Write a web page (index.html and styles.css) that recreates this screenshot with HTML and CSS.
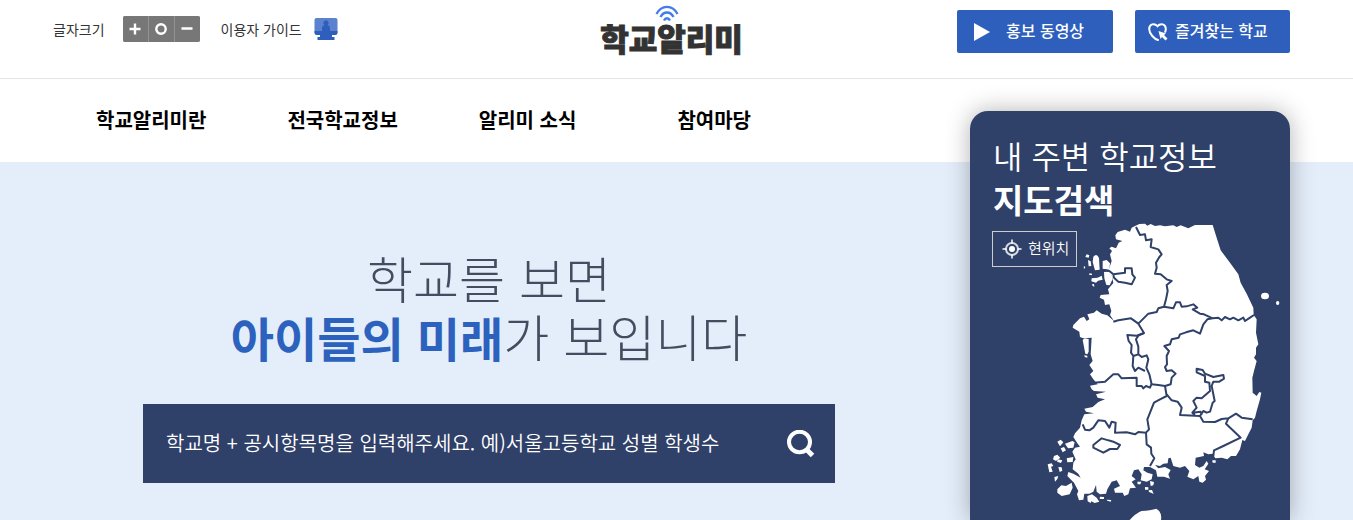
FILE: index.html
```html
<!DOCTYPE html>
<html lang="ko">
<head>
<meta charset="utf-8">
<meta name="viewport" content="width=device-width, initial-scale=1">
<title>학교알리미</title>
<link rel="stylesheet" href="styles.css">
</head>
<body>
<header class="top">
  <div class="tools">
    <span class="tools-label">글자크기</span>
    <div class="size-buttons">
      <button type="button" aria-label="글자 크게"><svg width="12" height="12" viewBox="0 0 12 12"><path d="M6 0.5v11M0.5 6h11"/></svg></button>
      <button type="button" aria-label="글자 기본"><svg width="12" height="12" viewBox="0 0 12 12"><circle cx="6" cy="6" r="4.7"/></svg></button>
      <button type="button" aria-label="글자 작게"><svg width="12" height="12" viewBox="0 0 12 12"><path d="M0.5 5.5h11"/></svg></button>
    </div>
    <a class="guide" href="#">이용자 가이드
      <svg width="24" height="24" viewBox="0 0 24 24"><rect x="0.5" y="1" width="23" height="16" rx="2" fill="#5a82cf"/><path d="M.5 14H8v-2.500q0-3 2.500-3.500a2.500 2.500 0 1 1 3 0q2.500.5 2.500 3.500V14h7.500v2q0 2-2 2H18v2h2.500v3h-17v-3H6v-2H2.500q-2 0-2-2z" fill="#2e5fbd"/></svg>
    </a>
  </div>
  <a class="logo" href="#">
    <svg width="24" height="17" viewBox="0 0 24 17"><path d="M1.500 9C6.500-.5 17.500-.5 22.500 9M5.500 12c3-6 10-6 13 0M9 15.500c1.500-3 4.500-3 6 0"/></svg>
    <span>학교알리미</span>
  </a>
  <div class="links">
    <a class="link-button" href="#"><svg class="play" width="16" height="18" viewBox="0 0 16 18"><path d="M0 0l16 9-16 9z" fill="#fff"/></svg><span>홍보 동영상</span></a>
    <a class="link-button favorite" href="#"><svg width="20" height="18" viewBox="0 0 20 18"><path d="M10 17C6.500 16 1.200 11 1.200 6 1.200.8 6.500-.2 9.500 3.200 12.500-.2 17.800.8 17.800 6c0 1.200-.2 2-.6 2.800" fill="none" stroke="#fff" stroke-width="2" stroke-linecap="round"/><path d="M10.500 8l7.500 2.500-2 1.500 3.500 3.500-2 2-3.500-3.500-1.500 2z" fill="#fff"/></svg><span>즐겨찾는 학교</span></a>
  </div>
</header>
<nav class="menu">
  <ul>
    <li><a href="#">학교알리미란</a></li>
    <li><a href="#">전국학교정보</a></li>
    <li><a href="#">알리미 소식</a></li>
    <li><a href="#">참여마당</a></li>
  </ul>
</nav>
<main class="hero">
  <section class="intro">
    <h1>학교를 보면<br><strong>아이들의 미래</strong>가 보입니다</h1>
    <form class="search">
      <input type="text" aria-label="학교 검색" placeholder="학교명 + 공시항목명을 입력해주세요. 예)서울고등학교 성별 학생수">
      <button type="submit" aria-label="검색"><svg width="28" height="28" viewBox="0 0 28 28"><ellipse cx="12.500" cy="12" rx="10.500" ry="10.300"/><path d="M19.500 19.500l6 6" stroke-width="5"/></svg></button>
    </form>
  </section>
  <aside class="map-card">
    <h2>내 주변 학교정보<br><strong>지도검색</strong></h2>
    <div class="map-area">
      <svg class="map" viewBox="0 30 780 900" role="img" aria-label="대한민국 지도">
        <g class="land">
          <path d="M315 45L328 39 345 38 352 44 362 39 375 45 390 43 405 46 430 43 440 48 452 43 475 52 495 42H548L560 80 572 118 600 155 625 190 632 215 650 248 670 290 671 312 680 325 678 365 685 400 678 410V430L672 440 680 450 672 480 667 500 668 545 680 555 688 543 694 545 690 565 680 600 675 620 668 628 665 650 655 670 645 690 637 687 630 715 618 735 603 735 592 745 575 740 556 742 548 728 535 730 520 724 522 735 497 740 495 762 508 770 520 765 530 750 535 758 524 775 537 780 525 795 528 806 518 815 508 812 505 795 490 805 472 797 478 780 465 765 450 770 430 765 422 740 415 742 413 757 400 758 390 765 375 762 385 772 405 768 422 777 415 790 420 803 402 797 382 797 378 778 360 768 342 768 340 778 352 785 368 790 365 805 350 812 332 808 335 790 325 775 312 778 305 795 317 805 305 812 318 830 300 832 295 850 283 855 278 845 255 845 252 833 270 825 260 808 245 812 232 835 228 848 210 850 200 842 198 822 190 842 178 848 163 848 160 866 147 868 141 850 145 840 132 815 112 795 115 783 130 788 152 800 145 788 128 775 130 755 137 745 127 722 135 710 150 707 142 697 130 678 135 667 150 650 155 628 163 610 192 607 168 602 163 593 188 588 205 573 225 565 203 560 198 550 228 542 192 540 185 535 180 524 203 520 190 505 180 490 190 480 178 462 188 450 182 430 185 380 160 382 150 378 148 362 128 350 130 342 150 322 162 317 170 330 178 325 172 310 192 305 200 298 215 308 232 313 252 330 240 312 244 300 238 280 225 282 222 266 209 260 212 252 238 250 234 235 250 216 246 195 236 178 240 165 245 150 240 130 246 120 238 112 245 107 258 112 266 95 277 90 258 85 256 73 263 63 285 56 300 62 305 50z"/>
          <path d="M170 130l8 3-2 7-10-2zM162 165l4 3-2 5-3-2zM174 147l8 4 2 14-8 1zM190 137q10-12 17 4l2 35-14 2-7-25zM218 150l12-3 10 10-2 19-20-3zM178 187l8 1v4h-8zM185 202l18-2 12-6 3 12-14 3-6 6-14-4zM222 183l20-2 6 23-9 19-10-1-6-20zM186 220l6-1 1 8-5-2z"/>
          <path d="M158 387l6-5 12 2v38l-4 8-6-2zM163 433l9 1v6l-8-2z"/>
          <ellipse cx="705" cy="255" rx="12" ry="10"/><ellipse cx="743" cy="276" rx="5" ry="6"/>
          <path d="M82 692l10-6 8 8-10 12zM92 712l10-4 6 10-10 6zM105 698l22-8 7 4-4 16-16 2zM72 735l10-4 9 9-13 10-9-5zM84 745l13 3-4 8-12-4zM110 742l20-4-2 15-16 1zM53 760l12-3 5 8-7 2 5 15-10 2zM85 768l10 1 2 10-8 4zM73 798l12-3-3 9-7 8zM82 835l12-12 14 2 17-10 3 15-9 20-24 5-13-10z"/>
          <path d="M172 855l14-5 14 10 8 12-14 4-10-5-2 5-9-5zM210 857l12 1v6h-13zM230 866l14 1-2 5-10-3zM345 828l10 1v7h-10zM356 838l10-1 5 12-6-3-8-3zM360 810l12 3-2 10-8 2zM547 748h10v7h-9zM322 812h12l-3 8h-8z"/>
          <path d="M296 930q22-24 38-30 28-2 45-7 18 10 14 37z"/>
        </g>
        <g class="borders">
          <path d="M318 48L330 72 345 70 348 88 365 85 362 108 385 115 395 130 388 138 378 155 380 170 375 188 392 190 410 205 425 210 410 222 413 240 408 265 402 287 385 292 380 303 355 308 325 338M250 332L265 328 303 322 325 338 342 366 325 374"/>
          <path d="M402 287L430 292 438 274 450 274 455 287 470 286 490 280 502 290 488 295 510 308 522 310 548 322 565 320 575 328 585 318 600 325 610 320 625 328 640 320 645 330 660 320 672 312M548 322L532 325 520 340 510 368 490 358 468 364 450 370 446 380 425 385 420 400 403 405 417 420 410 435 411 460 405 468 410 480 425 478 437 488 425 500 422 520 405 525"/>
          <path d="M342 366L320 374 292 372 296 390 305 402 303 425 310 435 325 430 325 407 318 385 325 374M325 430L335 438 350 433 355 445 349 470 358 490 365 520 385 522 405 525M310 435L308 465 315 480 325 470 345 480"/>
          <path d="M190 515L225 512 250 490 265 490 275 502 320 500 320 525 335 525 340 532 348 525 360 530 365 518M405 525L410 555 390 565 372 575 358 610 352 625 357 655 348 665 325 663 315 670 290 664 255 665 257 635 245 632 238 650 225 630 205 628 190 650 178 658 165 656 158 640M348 665L350 700 363 710 364 728 373 742 360 765"/>
          <path d="M410 550L425 568 443 572 455 590 450 612 510 615 520 632 555 633 575 624 595 622 618 608 635 620 668 625M595 622L588 638 632 680 580 705 552 718 550 735M515 612L512 602 487 605 500 590 490 570 500 560 515 562 540 540 538 515 525 512 525 495 500 484 500 473 518 477 525 488 550 498 580 492 582 503 568 512 550 512 545 525 554 570 548 575 540 602 530 605 520 600 510 615M487 605L495 612M190 702L215 682 235 688 250 692 270 702 262 714 240 714 220 725 190 710zM220 178L238 180 250 190 285 185 285 172 305 172 307 190 315 200 305 220 285 215 265 212 252 200 250 190"/>
        </g>
      </svg>
      <button type="button" class="locate"><svg width="20" height="20" viewBox="0 0 20 20"><circle cx="10" cy="10" r="6" fill="none" stroke="#d5d9e2" stroke-width="2"/><circle cx="10" cy="10" r="3" fill="#fff"/><path d="M10 0.500v4M10 15.500v4M.5 10h4M15.500 10h4" stroke="#fff" stroke-width="1.500"/></svg><span>현위치</span></button>
    </div>
  </aside>
</main>
</body>
</html>
```
FILE: styles.css
```css
* {
  box-sizing: border-box;
}

body {
  margin: 0;
  background: #fff;
  color: #333;
  font-family: "Noto Sans CJK KR", "Liberation Sans", sans-serif;
}

a {
  color: inherit;
  text-decoration: none;
}

svg {
  display: block;
  flex: none;
}

button,
input {
  font: inherit;
  color: inherit;
}

.top {
  display: grid;
  grid-template-columns: 1fr auto 1fr;
  height: 79px;
  padding: 0 63px 0 53px;
  border-bottom: 1px solid #e5e5e5;
}

.tools {
  display: flex;
  align-items: center;
  align-self: start;
  height: 58px;
  font-size: 14px;
}

.size-buttons {
  display: flex;
  gap: 1px;
  margin: 0 21px 0 18px;
  overflow: hidden;
  border-radius: 2px;
  background: #929292;
}

.size-buttons button {
  display: grid;
  place-items: center;
  width: 25px;
  height: 26px;
  padding: 0;
  border: 0;
  background: #777;
}

.size-buttons svg {
  fill: none;
  stroke: #fff;
  stroke-width: 2.4;
}

.guide {
  display: flex;
  align-items: center;
  gap: 12px;
}

.logo {
  display: flex;
  flex-direction: column;
  align-items: center;
  padding: 5px 0 0;
  color: #333;
  font-size: 31px;
  font-weight: 900;
  line-height: 32px;
  -webkit-text-stroke: 1px #333;
}

.logo svg {
  margin-right: 8px;
  fill: none;
  stroke: #427bea;
  stroke-width: 2.4;
}

.links {
  display: flex;
  justify-content: flex-end;
  gap: 22px;
  padding-top: 10px;
}

.link-button {
  display: flex;
  align-items: center;
  gap: 16px;
  width: 156px;
  height: 43px;
  padding: 0 17px 3px;
  border-radius: 2px;
  background: #2e5fbd;
  color: #fff;
  font-size: 16px;
  font-weight: 500;
}

.link-button svg {
  margin-top: 3px;
}

.favorite {
  gap: 7px;
  width: 155px;
  padding: 0 13px 3px;
}

.menu {
  height: 83px;
  padding: 0 96px 2px;
}

.menu ul {
  display: flex;
  align-items: center;
  gap: 81px;
  height: 100%;
  margin: 0;
  padding: 0;
  list-style: none;
  color: #000;
  font-size: 20px;
  font-weight: 700;
}

.menu li:last-child {
  margin-left: 20px;
}

.hero {
  display: flex;
  justify-content: space-between;
  padding: 0 63px 0 143px;
  background: #e4eefa;
}

.intro {
  flex: 0 1 692px;
  padding-top: 86px;
}

.intro h1 {
  margin: 0 0 40px;
  color: #444c5f;
  font-size: 50px;
  font-weight: 300;
  line-height: 58px;
  text-align: center;
}

.intro h1 {
  margin-bottom: 38px;
}

.intro h1 strong {
  color: #2c62be;
  font-size: 47px;
  font-weight: 700;
}

.search {
  display: flex;
  align-items: center;
  height: 79px;
  padding: 0 20px 0 23px;
  background: #2f4069;
  color: #fff;
}

.search input {
  flex: 1;
  min-width: 0;
  padding: 0 0 2px;
  border: 0;
  outline: 0;
  background: none;
  font-size: 20px;
  font-weight: 350;
}

.search input::placeholder {
  color: #fff;
  opacity: 1;
}

.search button {
  padding: 0;
  border: 0;
  background: none;
}

.search svg {
  fill: none;
  stroke: #fff;
  stroke-width: 4;
}

.map-card {
  flex: none;
  width: 320px;
  margin-top: -51px;
  padding: 22px 0 0 23px;
  border-radius: 18px 18px 0 0;
  background: #2f4069;
  box-shadow: 0 0 24px rgba(0, 0, 0, 0.3);
  color: #fff;
}

.map-card h2 {
  margin: 0;
  font-size: 32px;
  font-weight: 350;
  line-height: 44px;
}

.map-card h2 strong {
  font-size: 33px;
  font-weight: 700;
}

.map-area {
  display: grid;
}

.map,
.locate {
  grid-area: 1 / 1;
}

.map {
  justify-self: end;
  width: 260px;
  height: 300px;
}

.land {
  fill: #fff;
}

.borders {
  fill: none;
  stroke: #2f4069;
  stroke-width: 6;
  stroke-linejoin: round;
}

.locate {
  display: flex;
  align-items: center;
  justify-self: start;
  align-self: start;
  gap: 6px;
  height: 36px;
  margin: 10px 0 0 -1px;
  padding: 0 7px 0 9px;
  border: 1px solid #ccc;
  background: none;
  font-size: 15px;
  font-weight: 350;
}

.locate span {
  padding-bottom: 4px;
}
```
